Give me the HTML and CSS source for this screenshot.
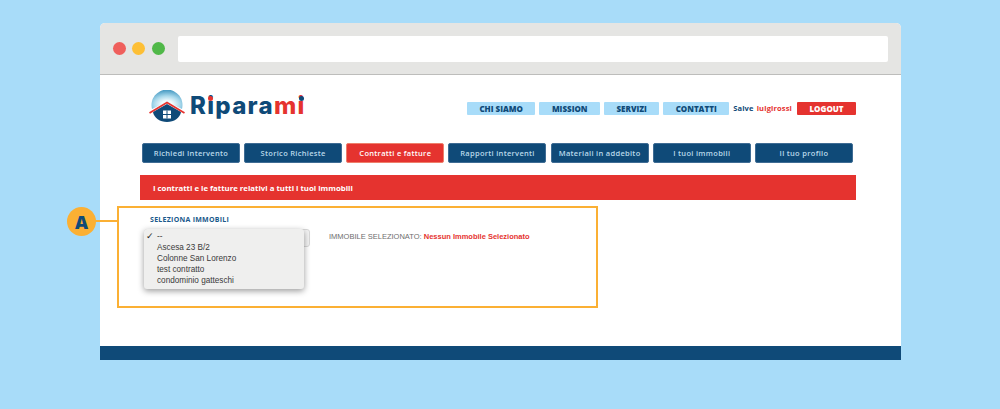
FILE: index.html
```html
<!DOCTYPE html>
<html lang="it">
<head>
<meta charset="utf-8">
<title>Riparami</title>
<link rel="stylesheet" href="styles.css">
</head>
<body>
<div class="annotation-badge">A</div>
<div class="annotation-line"></div>
<div class="annotation-box"></div>
<div class="window">
  <div class="chrome">
    <div class="dots"><span class="dot dot-red"></span><span class="dot dot-yellow"></span><span class="dot dot-green"></span></div>
    <div class="url"></div>
  </div>
  <div class="page">
    <header class="header">
      <div class="logo">
        <svg class="logo-mark" width="36" height="33" viewBox="0 0 36 33" aria-hidden="true">
          <defs>
            <radialGradient id="sky" cx="0.5" cy="0.75" r="0.7">
              <stop offset="0.25" stop-color="#f2fafd"/><stop offset="0.6" stop-color="#a9d9ec"/><stop offset="1" stop-color="#4f9fc6"/>
            </radialGradient>
          </defs>
          <path d="M3 19A15.500 15.500 0 1 1 33 19L18 12Z" fill="url(#sky)"/>
          <path d="M4 22L18 14 32 22C31 28 25 32 18 32 11 32 5 28 4 22Z" fill="#0f4a78"/>
          <path d="M.5 23L18 12.500 35.500 23" fill="none" stroke="#e5332f" stroke-width="1.800"/>
          <path d="M14 20.500h8v8h-8z" fill="#fff"/>
          <path d="M18 20.500v8M14 24.500h8" stroke="#0f4a78" stroke-width="1"/>
        </svg>
        <div class="logo-text">R<span class="tittle tittle-red">i</span>para<span class="logo-accent">m<span class="tittle tittle-blue">i</span></span></div>
      </div>
      <nav class="top-nav">
        <a class="top-link w-chi">CHI SIAMO</a>
        <a class="top-link w-mission">MISSION</a>
        <a class="top-link w-servizi">SERVIZI</a>
        <a class="top-link w-contatti">CONTATTI</a>
        <span class="greeting">Salve <span class="user">luigirossi</span></span>
        <a class="logout">LOGOUT</a>
      </nav>
    </header>
    <nav class="main-nav">
      <a class="main-link">Richiedi Intervento</a>
      <a class="main-link">Storico Richieste</a>
      <a class="main-link active">Contratti e fatture</a>
      <a class="main-link">Rapporti interventi</a>
      <a class="main-link">Materiali in addebito</a>
      <a class="main-link">I tuoi immobili</a>
      <a class="main-link">Il tuo profilo</a>
    </nav>
    <div class="banner">I contratti e le fatture relativi a tutti i tuoi immobili</div>
    <section class="content">
      <h2 class="section-title">SELEZIONA IMMOBILI</h2>
      <div class="select-row">
        <div class="select-wrap">
          <div class="select-closed"></div>
          <ul class="dropdown">
            <li class="option checked">--</li>
            <li class="option">Ascesa 23 B/2</li>
            <li class="option">Colonne San Lorenzo</li>
            <li class="option">test contratto</li>
            <li class="option">condominio gatteschi</li>
          </ul>
        </div>
        <p class="selected">IMMOBILE SELEZIONATO: <strong class="selected-value">Nessun Immobile Selezionato</strong></p>
      </div>
    </section>
    <footer class="footer"></footer>
  </div>
</div>
</body>
</html>
```
FILE: styles.css
```css
* { box-sizing: border-box; }
html, body { margin: 0; height: 409px; overflow: hidden; }
body {
  position: relative;
  padding: 23px 99px 49px 100px;
  background: #a8dcf9;
  font-family: "Open Sans", sans-serif;
}
.window {
  height: 337px;
  display: flex;
  flex-direction: column;
  background: #fff;
  border-radius: 5px 5px 0 0;
  overflow: hidden;
}
.chrome {
  height: 52px;
  flex: none;
  display: flex;
  align-items: flex-start;
  padding: 13px 13px 0 13px;
  background: #e5e5e3;
  border-bottom: 1px solid #bdbdbb;
}
.dots { display: flex; gap: 6.400px; margin-top: 6px; }
.dot { width: 13px; height: 13px; border-radius: 50%; }
.dot-red { background: #ef5f5c; }
.dot-yellow { background: #fdbf35; }
.dot-green { background: #50b848; }
.url { flex: 1; height: 26px; margin-left: 13px; background: #fff; border-radius: 2px; }
.page { flex: 1; display: flex; flex-direction: column; min-height: 0; }
.header { height: 68px; flex: none; display: flex; justify-content: space-between; padding: 15px 45px 0 49px; }
.logo { display: flex; align-items: flex-start; }
.logo-mark { flex: none; }
.logo-text { margin-left: 5px; font: 800 24px/32px Inter, sans-serif; color: #0f4a78; letter-spacing: 1.300px; }
.logo-accent { color: #e5332f; }
.tittle { position: relative; }
.tittle::after {
  content: "";
  position: absolute;
  left: 50%;
  top: 5px;
  width: 5px;
  height: 5px;
  margin-left: -3px;
  border-radius: 50%;
}
.tittle-red::after { background: #e5332f; }
.tittle-blue::after { background: #0f4a78; }
.top-nav { display: flex; align-items: flex-start; padding-top: 12px; }
.top-link, .logout {
  height: 13px;
  display: flex;
  align-items: center;
  justify-content: center;
  font-weight: 800;
  font-size: 8px;
  border-radius: 1px;
}
.top-link { margin-right: 4px; background: #a8dcf9; color: #0f4a78; }
.w-chi { width: 68px; }
.w-mission { width: 61px; }
.w-servizi { width: 55px; }
.w-contatti { width: 66px; }
.greeting { margin-right: 5px; font-size: 7.500px; line-height: 13px; font-weight: 700; color: #0f4a78; letter-spacing: 0.150px; word-spacing: 1px; }
.user { color: #e5332f; }
.logout { width: 59px; background: #e5332f; color: #fff; }
.main-nav { display: flex; flex: none; gap: 4.170px; padding: 0 0 0 42px; height: 20px; }
.main-link {
  width: 98px;
  height: 20px;
  display: flex;
  align-items: center;
  justify-content: center;
  background: #0f4a78;
  border: 1px solid #3f6c94;
  border-radius: 2px;
  color: #b9d9ea;
  font-size: 7.500px;
  font-weight: 600;
  letter-spacing: 0.300px;
}
.main-link.active { background: #e5332f; border-color: #ee7f6b; color: #fff; }
.banner {
  flex: none;
  margin: 12px 45px 0 40px;
  height: 25px;
  padding-left: 13px;
  display: flex;
  align-items: center;
  background: #e5332f;
  color: #fff;
  font-size: 7.800px;
  font-weight: 700;
}
.content { flex: 1; min-height: 0; padding: 14px 0 0 50px; }
.section-title { margin: 0; font-size: 7px; line-height: 11px; font-weight: 700; color: #1a5a8c; letter-spacing: 0.270px; }
.select-row { display: flex; align-items: flex-start; margin-top: 4px; margin-left: -6px; }
.select-wrap { position: relative; width: 166px; height: 18px; flex: none; }
.select-closed { height: 18px; background: #f3f3f3; border: 1px solid #d8d8d8; border-radius: 3px; }
.dropdown {
  position: absolute;
  top: 0;
  left: 0;
  width: 160px;
  height: 60px;
  margin: 0;
  padding: 2px 0 0 13px;
  list-style: none;
  background: #efefee;
  border-radius: 3px;
  box-shadow: 0 2px 6px rgba(0, 0, 0, 0.4);
}
.option { position: relative; font: 8.200px/11px "Liberation Sans", Arial, sans-serif; color: #3a3a3a; }
.option.checked::before { content: "✓"; position: absolute; left: -11px; top: 0; font: 700 9px/11px "DejaVu Sans", sans-serif; color: #222; }
.selected { margin: 2px 0 0 19px; font: 7.500px/11px "Liberation Sans", Arial, sans-serif; color: #6e6e6e; white-space: nowrap; }
.selected-value { color: #e5332f; font-weight: 700; }
.footer { flex: none; height: 14px; background: #0f4a78; }
.annotation-box {
  position: absolute;
  left: 117px;
  top: 206px;
  width: 481px;
  height: 102px;
  border: 2px solid #fbb034;
  z-index: 2;
}
.annotation-line {
  position: absolute;
  left: 95px;
  top: 220px;
  width: 23px;
  height: 2px;
  background: #fbb034;
  z-index: 2;
}
.annotation-badge {
  position: absolute;
  left: 67px;
  top: 207px;
  width: 29px;
  height: 29px;
  display: flex;
  align-items: center;
  justify-content: center;
  border-radius: 50%;
  background: #fbb034;
  color: #0f4a78;
  font-size: 18px;
  font-weight: 800;
  z-index: 3;
}
```
